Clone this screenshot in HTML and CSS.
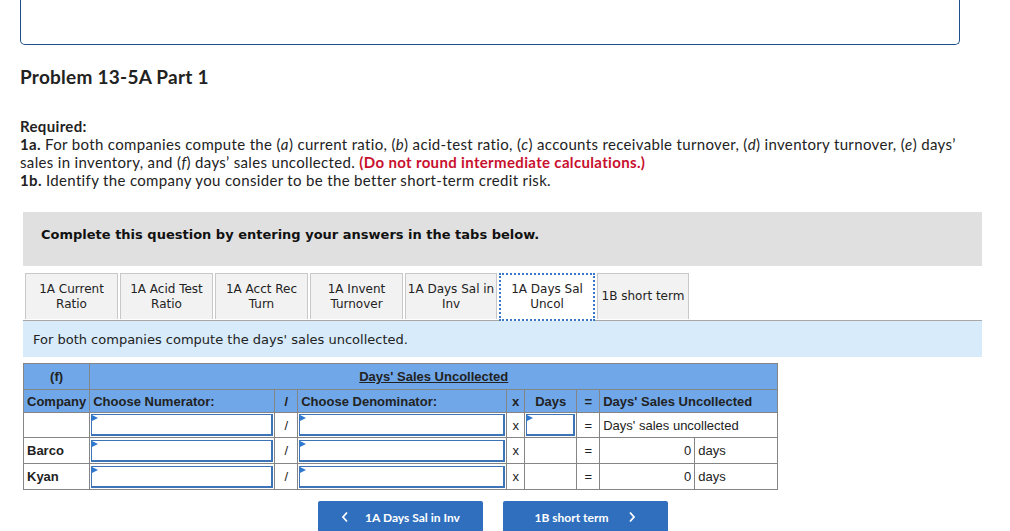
FILE: index.html
```html
<!DOCTYPE html>
<html>
<head>
  <title>Problem 13-5A Part 1</title>
  <link rel="stylesheet" href="styles.css">
</head>
<body>
  <div class="page">
    <div class="answer-box"></div>

    <h1 class="title">Problem 13-5A Part 1</h1>

    <div class="required">
      <p><b>Required:</b></p>
      <p><b>1a.</b> For both companies compute the (<i>a</i>) current ratio, (<i>b</i>) acid-test ratio, (<i>c</i>) accounts receivable turnover, (<i>d</i>) inventory turnover, (<i>e</i>) days’ sales in inventory, and (<i>f</i>) days’ sales uncollected. <span class="warn">(Do not round intermediate calculations.)</span></p>
      <p><b>1b.</b> Identify the company you consider to be the better short-term credit risk.</p>
    </div>

    <div class="notice">Complete this question by entering your answers in the tabs below.</div>

    <div class="tabs">
      <div class="tab">1A Current Ratio</div>
      <div class="tab">1A Acid Test Ratio</div>
      <div class="tab">1A Acct Rec Turn</div>
      <div class="tab">1A Invent Turnover</div>
      <div class="tab">1A Days Sal in Inv</div>
      <div class="tab active">1A Days Sal Uncol</div>
      <div class="tab">1B short term</div>
    </div>

    <div class="instructions">For both companies compute the days' sales uncollected.</div>

    <table class="calc">
      <tr class="head">
        <th class="c-company">(f)</th>
        <th colspan="8"><u>Days' Sales Uncollected</u></th>
      </tr>
      <tr class="head">
        <th class="c-company">Company</th>
        <th class="left c-num">Choose Numerator:</th>
        <th class="c-op">/</th>
        <th class="left c-den">Choose Denominator:</th>
        <th class="c-op2">x</th>
        <th class="c-days">Days</th>
        <th class="c-op">=</th>
        <th class="left" colspan="2">Days' Sales Uncollected</th>
      </tr>
      <tr>
        <td></td>
        <td class="cell-input"><div class="input"></div></td>
        <td class="op">/</td>
        <td class="cell-input"><div class="input"></div></td>
        <td class="op">x</td>
        <td class="cell-input"><div class="input"></div></td>
        <td class="op">=</td>
        <td colspan="2">Days' sales uncollected</td>
      </tr>
      <tr class="tall">
        <td class="name">Barco</td>
        <td class="cell-input"><div class="input"></div></td>
        <td class="op">/</td>
        <td class="cell-input"><div class="input"></div></td>
        <td class="op">x</td>
        <td></td>
        <td class="op">=</td>
        <td class="value">0</td>
        <td class="unit">days</td>
      </tr>
      <tr class="tall">
        <td class="name">Kyan</td>
        <td class="cell-input"><div class="input"></div></td>
        <td class="op">/</td>
        <td class="cell-input"><div class="input"></div></td>
        <td class="op">x</td>
        <td></td>
        <td class="op">=</td>
        <td class="value">0</td>
        <td class="unit">days</td>
      </tr>
    </table>

    <div class="nav">
      <button class="nav-button">
        <svg class="chev" width="8" height="12" viewBox="0 0 8 12"><polyline points="6,1.5 2,6 6,10.5" /></svg>
        1A Days Sal in Inv
      </button>
      <button class="nav-button next">
        1B short term
        <svg class="chev" width="8" height="12" viewBox="0 0 8 12"><polyline points="2,1.5 6,6 2,10.5" /></svg>
      </button>
    </div>
  </div>
</body>
</html>
```

FILE: styles.css
```css
body {
  margin: 0;
  padding: 0;
  background-color: #fff;
  color: #222;
  font-family: Lato, "Open Sans", sans-serif;
}

.page {
  padding-left: 20px;
  width: 962px;
}

.answer-box {
  height: 44px;
  width: 938px;
  border: 1px solid #1f4e8c;
  border-top: none;
  border-radius: 0 0 5px 5px;
}

.title {
  font-size: 19px;
  font-weight: bold;
  letter-spacing: 0.25px;
  margin: 21px 0 0 0;
  line-height: 22px;
}

.required {
  margin-top: 29px;
  width: 945px;
  font-size: 15px;
  letter-spacing: 0.34px;
  line-height: 18px;
}

.required p {
  margin: 0;
}

.warn {
  color: #c8102e;
  font-weight: bold;
}

.notice {
  margin: 23px 0 0 3px;
  height: 54px;
  box-sizing: border-box;
  padding: 15px 0 0 18px;
  background-color: #e0e0e0;
  font-family: "DejaVu Sans", Verdana, sans-serif;
  font-size: 13px;
  font-weight: bold;
  color: #111;
}

.tabs {
  display: flex;
  gap: 2px;
  margin: 7px 0 0 3px;
  padding-left: 2px;
  border-bottom: 1px solid #a8a8a8;
}

.tab {
  width: 93px;
  height: 46px;
  box-sizing: border-box;
  background-color: #f2f2f2;
  border: 1px solid #c8c8c8;
  border-bottom: none;
  display: flex;
  align-items: center;
  justify-content: center;
  text-align: center;
  font-family: "DejaVu Sans", Verdana, sans-serif;
  font-size: 12px;
  line-height: 15px;
  color: #222;
  padding: 0 1px;
}

.tab:nth-child(5) {
  width: 92px;
}

.tab:last-child {
  width: 92px;
}

.tab.active {
  width: 96px;
  height: 48px;
  margin-bottom: -1px;
  background-color: #fff;
  border: 2px dotted #3a77c8;
}

.instructions {
  margin-left: 3px;
  height: 36px;
  box-sizing: border-box;
  padding: 11px 0 0 10px;
  background-color: #d7ebfa;
  font-family: "DejaVu Sans", Verdana, sans-serif;
  font-size: 13px;
  color: #222;
}

.calc {
  margin: 6px 0 0 3px;
  border-collapse: collapse;
  font-family: "Liberation Sans", Arial, sans-serif;
  font-size: 13px;
  color: #222;
}

.calc th,
.calc td {
  border: 1px solid #858585;
  padding: 0 3px;
  height: 23px;
  box-sizing: border-box;
}

.calc tr.head th {
  background-color: #6fa7e9;
  font-weight: bold;
  color: #222;
  text-align: center;
}

.calc tr.head th.left {
  text-align: left;
}

.calc tr.head:first-child th {
  height: 26px;
}

.calc tr.tall td {
  height: 26px;
}

.c-company { width: 66px; }
.c-num { width: 185px; }
.c-op { width: 23px; }
.c-den { width: 209px; }
.c-op2 { width: 18px; }
.c-days { width: 52px; }

.calc td.op {
  text-align: center;
}

.calc td.name {
  font-weight: bold;
}

.calc td.value {
  text-align: right;
  width: 95px;
}

.calc td.unit {
  width: 83px;
}

.calc td.cell-input {
  padding: 1px;
}

.input {
  position: relative;
  height: 22px;
  box-sizing: border-box;
  border: 2px solid #3d74b8;
  border-top-width: 1px;
  border-left-width: 1.5px;
  background-color: #fff;
}

.input::before {
  content: "";
  position: absolute;
  left: 0;
  top: 0;
  border-left: 6px solid #2f78d0;
  border-top: 3px solid transparent;
  border-bottom: 3px solid transparent;
}

.nav {
  display: flex;
  gap: 20px;
  margin: 11px 0 0 298px;
}

.nav-button {
  width: 165px;
  height: 34px;
  border: none;
  border-radius: 2px;
  background-color: #2f6fbe;
  color: #fff;
  font-family: Lato, "Open Sans", sans-serif;
  font-size: 12px;
  font-weight: bold;
  display: flex;
  align-items: center;
  justify-content: center;
  gap: 16px;
  padding: 0 0 2px 0;
  cursor: pointer;
}

.nav-button.next {
  gap: 20px;
}

.chev polyline {
  fill: none;
  stroke: #fff;
  stroke-width: 1.8;
}
```
